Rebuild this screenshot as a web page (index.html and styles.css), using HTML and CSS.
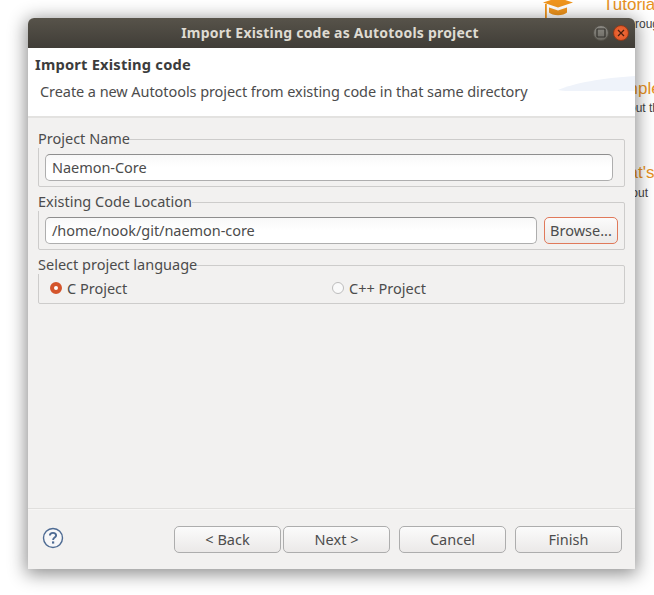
FILE: index.html
```html
<!DOCTYPE html>
<html lang="en">
<head>
<meta charset="utf-8">
<title>Import Existing code as Autotools project</title>
<link rel="stylesheet" href="styles.css">
</head>
<body>
<div class="backdrop">
  <svg class="cap" width="36" height="20" viewBox="0 0 36 20" aria-hidden="true">
    <path d="M3 2.6 18-2.4 33 2.6 18 7.6Z" fill="#f0951c"/>
    <path d="M9 7.4 18 10.4 27 7.4V12.6C24 16 12 16 9 12.6Z" fill="#f0951c"/>
    <rect x="5" y="4" width="1.8" height="14" fill="#f0951c"/>
  </svg>
  <span class="bg-head bg-h1">Tutorials</span>
  <span class="bg-sub bg-s1">through</span>
  <span class="bg-head bg-h2">Samples</span>
  <span class="bg-sub bg-s2">out the</span>
  <span class="bg-head bg-h3">What's</span>
  <span class="bg-sub bg-s3">about</span>
</div>

<main class="dialog">
  <header class="titlebar">
    <span class="title">Import Existing code as Autotools project</span>
    <div class="win-buttons">
      <span class="win-btn win-max"><svg width="10" height="10" viewBox="0 0 10 10"><rect x="1" y="1" width="8" height="8" rx="0.5" fill="none" stroke="#33312c" stroke-width="1.2"/></svg></span>
      <span class="win-btn win-close"><svg width="8" height="8" viewBox="0 0 8 8"><path d="M1 1 7 7M7 1 1 7" stroke="#4a1d0c" stroke-width="1.3"/></svg></span>
    </div>
  </header>

  <section class="banner">
    <svg class="swoosh" width="77" height="17" viewBox="0 0 77 17" aria-hidden="true">
      <path d="M0 15C16 8 44 3 77 1V16H20C10 16 3 16 0 15Z" fill="#eff3fa"/>
    </svg>
    <h1 class="banner-title">Import Existing code</h1>
    <p class="banner-text">Create a new Autotools project from existing code in that same directory</p>
  </section>

  <div class="content">
    <fieldset class="group">
      <legend class="group-label">Project Name</legend>
      <div class="row row-name">
        <div class="field">Naemon-Core</div>
      </div>
    </fieldset>
    <fieldset class="group">
      <legend class="group-label">Existing Code Location</legend>
      <div class="row">
        <div class="field">/home/nook/git/naemon-core</div>
        <button class="btn btn-browse" type="button">Browse...</button>
      </div>
    </fieldset>
    <fieldset class="group group-lang">
      <legend class="group-label">Select project language</legend>
      <div class="radios">
        <label class="radio-item"><span class="radio radio-on"></span>C Project</label>
        <label class="radio-item"><span class="radio"></span>C++ Project</label>
      </div>
    </fieldset>
  </div>

  <footer class="footer">
    <svg class="help" width="22" height="22" viewBox="0 0 22 22" aria-hidden="true">
      <circle cx="11" cy="11" r="9.5" fill="#f7f7f8" stroke="#4e6b93" stroke-width="1.4"/>
      <path d="M7.9 8.6C7.9 6.8 9.3 5.9 11 5.9S14.1 6.9 14.1 8.5C14.1 10.6 11.1 10.6 11.1 13" fill="none" stroke="#4e6b93" stroke-width="1.9"/>
      <rect x="10" y="14.4" width="2.2" height="2.2" fill="#4e6b93"/>
    </svg>
    <div class="actions">
      <div class="nav-pair">
        <button class="btn btn-action" type="button">&lt; Back</button>
        <button class="btn btn-action" type="button">Next &gt;</button>
      </div>
      <button class="btn btn-action" type="button">Cancel</button>
      <button class="btn btn-action" type="button">Finish</button>
    </div>
  </footer>
</main>
</body>
</html>
```

FILE: styles.css
```css
* { box-sizing: border-box; }

html, body {
  margin: 0;
  width: 654px;
  height: 595px;
  overflow: hidden;
  background: #ffffff;
}

body {
  position: relative;
  font-family: "Noto Sans", "Open Sans", sans-serif;
  font-size: 14.5px;
  color: #4c4c4c;
}

/* Window behind the dialog */
.backdrop {
  position: absolute;
  inset: 0;
  overflow: hidden;
  font-family: "Liberation Sans", sans-serif;
}
.cap { position: absolute; left: 540px; top: 0; }
.bg-head { position: absolute; left: 603px; font-size: 17px; color: #e8921f; white-space: nowrap; }
.bg-sub { position: absolute; font-size: 12px; color: #444; white-space: nowrap; }
.bg-h1 { top: -5px; }
.bg-s1 { top: 17px; left: 625px; }
.bg-h2 { top: 79px; }
.bg-s2 { top: 101px; left: 629px; }
.bg-h3 { top: 163px; }
.bg-s3 { top: 186px; left: 618px; }

/* Dialog */
.dialog {
  position: absolute;
  left: 28px;
  top: 18px;
  width: 607px;
  height: 551px;
  display: flex;
  flex-direction: column;
  background: #f2f1f0;
  border-radius: 6px 6px 0 0;
  box-shadow: 0 3px 18px 2px rgba(0, 0, 0, 0.45);
}

.titlebar {
  position: relative;
  flex: 0 0 30px;
  display: flex;
  align-items: center;
  justify-content: center;
  padding: 0 3px 1px 0;
  background: linear-gradient(#57534a, #403d37);
  border-radius: 6px 6px 0 0;
}
.title {
  font-size: 14px;
  font-weight: 700;
  letter-spacing: 0.21px;
  color: #dfdbd2;
  white-space: nowrap;
}
.win-buttons {
  position: absolute;
  right: 6px;
  top: 7px;
  display: flex;
  gap: 4px;
}
.win-btn {
  width: 16px;
  height: 16px;
  border-radius: 50%;
  display: flex;
  align-items: center;
  justify-content: center;
}
.win-max { background: linear-gradient(#8b8983, #6b6962); border: 1px solid #55524b; }
.win-close { background: radial-gradient(#f0703f, #de4f1e); border: 1px solid #8f3a1a; }

.banner {
  position: relative;
  flex: 0 0 70px;
  background: #ffffff;
  border-bottom: 2px solid #e3e2e0;
  padding: 6px 7px 0;
}
.swoosh { position: absolute; right: 0; top: 27px; }
.banner-title {
  margin: 0;
  font-size: 14.7px;
  line-height: 20px;
  font-weight: 700;
  color: #3c3c3c;
  letter-spacing: 0.2px;
}
.banner-text {
  margin: 7px 0 0 5px;
  line-height: 20px;
  letter-spacing: -0.07px;
}

.content {
  flex: 1 1 auto;
  padding: 13px 10px 0;
  display: flex;
  flex-direction: column;
  gap: 7px;
}

.group {
  margin: 0;
  padding: 6px 6px 0;
  height: 56px;
  border: 1px solid #cdcccb;
  border-radius: 2px;
  min-width: 0;
}
.group-lang { height: 47px; padding: 3px 11px 0; }
.group-label {
  margin-left: -7px;
  padding: 0 0 2px;
  line-height: 15px;
}
.group-lang .group-label { margin-left: -12px; }

.row {
  display: flex;
  align-items: center;
  gap: 7px;
}
.row-name { padding-right: 5px; }

.field {
  flex: 1 1 auto;
  height: 27px;
  padding-left: 6px;
  line-height: 25px;
  background: linear-gradient(#f8f8f8, #ffffff 50%);
  border: 1px solid #aeaeae;
  border-top-color: #8e8e8e;
  border-radius: 5px;
  letter-spacing: -0.05px;
}

.btn {
  height: 27px;
  padding: 0 0 2px;
  font: inherit;
  color: #4c4c4c;
  background: linear-gradient(#fbfbfb, #ebe9e8);
  border: 1px solid #adadad;
  border-radius: 5px;
}
.btn-browse {
  flex: 0 0 74px;
  border-color: #e0795a;
}

.radios { display: flex; margin-top: 1px; }
.radio-item {
  flex: 0 0 282px;
  display: flex;
  align-items: center;
  gap: 5px;
  height: 20px;
}
.radio {
  width: 12px;
  height: 12px;
  border-radius: 50%;
  background: #fafafa;
  border: 1px solid #bdbdbd;
}
.radio-on {
  background: #ffffff;
  border: 4px solid #d4552c;
}

.footer {
  flex: 0 0 61px;
  display: flex;
  justify-content: space-between;
  padding: 17px 13px 0 12px;
  border-top: 1px solid #e0dfdd;
  box-shadow: inset 0 1px 0 #f7f6f5;
}
.help { margin: 1px 0 0 2px; }
.actions { display: flex; gap: 9px; }
.nav-pair { display: flex; gap: 2px; }
.btn-action { width: 107px; }
```
